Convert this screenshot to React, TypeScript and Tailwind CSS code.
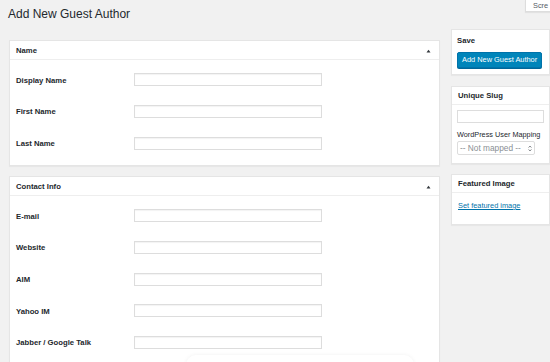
import { ReactNode } from 'react'

const nameFields = ['Display Name', 'First Name', 'Last Name']
const contactFields = ['E-mail', 'Website', 'AIM', 'Yahoo IM', 'Jabber / Google Talk']

function Toggle() {
  return (
    <svg width="5" height="4" viewBox="0 0 5 4" className="block">
      <path d="M0.5 3.5 L2.5 0.8 L4.5 3.5 Z" fill="#32373c" />
    </svg>
  )
}

function Box({ title, children }: { title: string; children: ReactNode }) {
  return (
    <div className="bg-white border border-[#e5e5e5] shadow-[0_1px_1px_rgba(0,0,0,0.04)]">
      <div className="h-[19px] flex items-center justify-between border-b border-[#eeeeee] pl-[6px] pr-[8px] pt-[1px]">
        <span className="text-[7.7px] font-bold text-[#23282d]">{title}</span>
        <Toggle />
      </div>
      {children}
    </div>
  )
}

function FieldRows({ fields }: { fields: string[] }) {
  return (
    <div className="pt-[4px] pb-[6px] pl-[6px]">
      {fields.map((label) => (
        <div key={label} className="h-[31.7px] flex items-center">
          <span className="w-[118px] text-[7.7px] font-bold text-[#23282d] pt-[1px]">{label}</span>
          <div className="w-[188px] h-[13px] border border-[#dddddd] bg-white shadow-[inset_0_1px_1px_rgba(0,0,0,0.05)]" />
        </div>
      ))}
    </div>
  )
}

export default function App() {
  return (
    <div className="relative w-[550px] h-[362px] overflow-hidden bg-[#f1f1f1] font-['Liberation_Sans',Arial,sans-serif]">
      <div className="flex items-start justify-between h-[20px]">
        <h1 className="pt-[8px] pl-[8px] text-[12px] leading-none font-normal text-[#23282d]">Add New Guest Author</h1>
        <div className="h-[12px] w-[26px] mr-[-1px] bg-white border border-t-0 border-[#dddddd] shadow-[0_1px_1px_rgba(0,0,0,0.06)] pl-[7px] text-[7.4px] leading-[11px] text-[#555d66] overflow-hidden whitespace-nowrap">
          Scre
        </div>
      </div>

      <div className="flex items-start gap-[11px] pl-[9px]">
        <div className="w-[432px] mt-[20px] flex flex-col gap-[10px]">
          <Box title="Name">
            <FieldRows fields={nameFields} />
          </Box>
          <Box title="Contact Info">
            <FieldRows fields={contactFields} />
          </Box>
        </div>

        <div className="w-[99px] shrink-0 mt-[9px] flex flex-col">
          <div className="bg-white border border-[#e5e5e5] shadow-[0_1px_1px_rgba(0,0,0,0.04)] px-[5px]">
            <div className="h-[21px] flex items-center text-[7.7px] font-bold text-[#23282d]">Save</div>
            <button className="block mt-[1px] mb-[6px] h-[16px] px-[4px] bg-[#0085ba] border border-[#0073aa] rounded-[2px] shadow-[0_1px_0_#006799] text-white text-[7.4px] leading-none whitespace-nowrap">
              Add New Guest Author
            </button>
          </div>

          <div className="mt-[11px] bg-white border border-[#e5e5e5] shadow-[0_1px_1px_rgba(0,0,0,0.04)]">
            <div className="h-[18px] flex items-center border-b border-[#eeeeee] px-[6px] pt-[1px] text-[7.7px] font-bold text-[#23282d]">
              Unique Slug
            </div>
            <div className="px-[5px] pt-[5px] pb-[8px]">
              <div className="w-[87px] h-[13px] border border-[#dddddd] bg-white" />
              <div className="mt-[7px] h-[10px] flex items-center text-[7.3px] text-[#23282d] whitespace-nowrap">
                WordPress User Mapping
              </div>
              <div className="mt-[1px] w-[78px] h-[14px] border border-[#dddddd] rounded-[2px] bg-white flex items-center justify-between pl-[2px] pr-[2px] text-[8.3px] text-[#8a8f94] whitespace-nowrap">
                <span>-- Not mapped --</span>
                <svg width="4" height="7" viewBox="0 0 4 7" className="block">
                  <path d="M0.6 2.6 L2 1 L3.4 2.6 M0.6 4.4 L2 6 L3.4 4.4" fill="none" stroke="#6b7075" strokeWidth="0.8" />
                </svg>
              </div>
            </div>
          </div>

          <div className="mt-[10px] bg-white border border-[#e5e5e5] shadow-[0_1px_1px_rgba(0,0,0,0.04)]">
            <div className="h-[18px] flex items-center border-b border-[#eeeeee] px-[6px] pt-[1px] text-[7.7px] font-bold text-[#23282d]">
              Featured Image
            </div>
            <div className="px-[6px] pt-[8px] pb-[13px]">
              <a href="#" className="block h-[10px] leading-[10px] text-[7.4px] text-[#0073aa] underline">
                Set featured image
              </a>
            </div>
          </div>
        </div>
      </div>

      <div className="absolute left-[186px] top-[355px] w-[228px] h-[20px] rounded-[10px] bg-white shadow-[0_0_4px_rgba(0,0,0,0.06)]" />
    </div>
  )
}
